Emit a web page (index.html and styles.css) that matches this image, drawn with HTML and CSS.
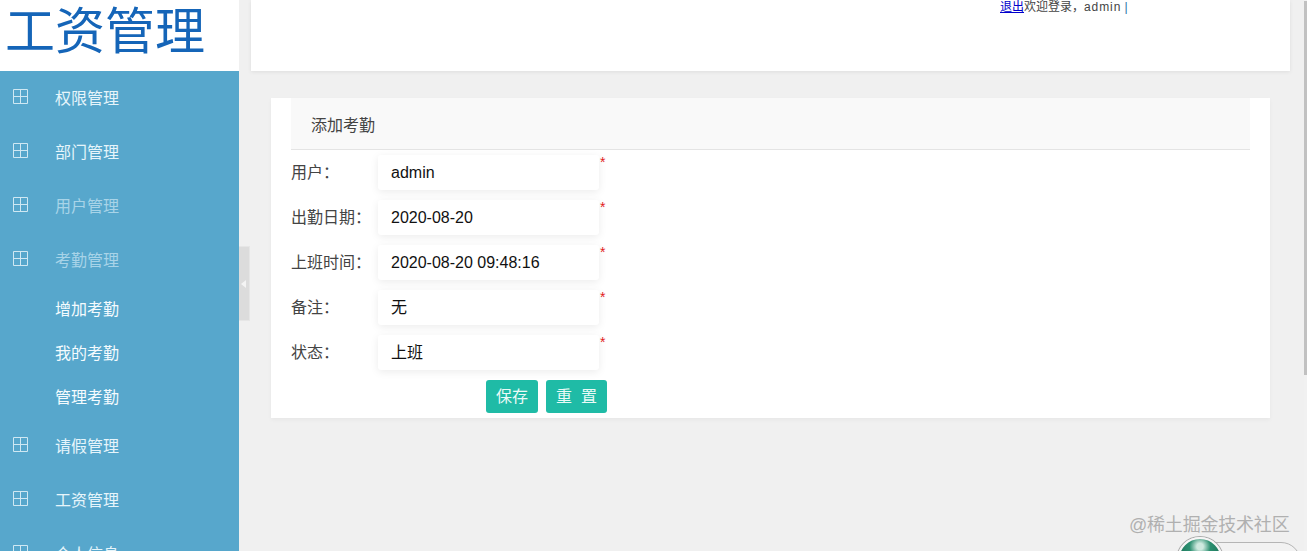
FILE: index.html
```html
<!DOCTYPE html>
<html lang="zh-CN">
<head>
<meta charset="utf-8">
<title>工资管理</title>
<link rel="stylesheet" href="styles.css">
</head>
<body>
<div class="page">
  <aside class="sidebar">
    <div class="logo">工资管理</div>
    <nav class="menu">
      <a class="item"><svg class="ico" viewBox="0 0 15 15"><path d="M.5.5h14v14H.5zM7.5.5v14M.5 7.5h14"/></svg>权限管理</a>
      <a class="item"><svg class="ico" viewBox="0 0 15 15"><path d="M.5.5h14v14H.5zM7.5.5v14M.5 7.5h14"/></svg>部门管理</a>
      <a class="item muted"><svg class="ico" viewBox="0 0 15 15"><path d="M.5.5h14v14H.5zM7.5.5v14M.5 7.5h14"/></svg>用户管理</a>
      <a class="item muted"><svg class="ico" viewBox="0 0 15 15"><path d="M.5.5h14v14H.5zM7.5.5v14M.5 7.5h14"/></svg>考勤管理</a>
      <a class="sub">增加考勤</a>
      <a class="sub">我的考勤</a>
      <a class="sub">管理考勤</a>
      <a class="item"><svg class="ico" viewBox="0 0 15 15"><path d="M.5.5h14v14H.5zM7.5.5v14M.5 7.5h14"/></svg>请假管理</a>
      <a class="item"><svg class="ico" viewBox="0 0 15 15"><path d="M.5.5h14v14H.5zM7.5.5v14M.5 7.5h14"/></svg>工资管理</a>
      <a class="item"><svg class="ico" viewBox="0 0 15 15"><path d="M.5.5h14v14H.5zM7.5.5v14M.5 7.5h14"/></svg>个人信息</a>
    </nav>
  </aside>
  <main class="main">
    <header class="top">
      <div class="user"><a class="logout" href="#">退出</a>欢迎登录，<span class="name">admin</span> <span class="bar">|</span></div>
    </header>
    <section class="card">
      <h2 class="card-title">添加考勤</h2>
      <form class="form">
        <div class="row"><label class="label">用户：</label><div class="input">admin</div><span class="star">*</span></div>
        <div class="row"><label class="label">出勤日期：</label><div class="input">2020-08-20</div><span class="star">*</span></div>
        <div class="row"><label class="label">上班时间：</label><div class="input">2020-08-20 09:48:16</div><span class="star">*</span></div>
        <div class="row"><label class="label">备注：</label><div class="input">无</div><span class="star">*</span></div>
        <div class="row"><label class="label">状态：</label><div class="input">上班</div><span class="star">*</span></div>
        <div class="actions"><span class="btn">保存</span><span class="btn">重&nbsp;&nbsp;置</span></div>
      </form>
    </section>
  </main>
  <div class="scroll"><div class="thumb"></div></div>
</div>
<div class="toggle"><span class="arrow"></span></div>
<div class="mark">@稀土掘金技术社区</div>
<div class="pill"></div>
<div class="orb"></div>
</body>
</html>
```
FILE: styles.css
```css
* { box-sizing: border-box; }
html, body { margin: 0; height: 100%; overflow: hidden; }
body {
  background: #f0f0f0;
  color: #333;
  font-family: "Liberation Sans", "Noto Sans CJK SC", sans-serif;
  font-size: 14px;
}
.page { display: flex; height: 551px; overflow: hidden; }

.sidebar { width: 239px; flex: none; background: #57a7cc; overflow: hidden; }
.logo {
  height: 71px;
  background: #fff;
  color: #1565b8;
  font-size: 50px;
  line-height: 65px;
  padding-left: 5px;
}
.menu { display: flex; flex-direction: column; }
.item {
  flex: none;
  height: 54px;
  display: flex;
  align-items: center;
  padding: 0 0 2px 13px;
  color: #e6f5fb;
  font-size: 16px;
}
.item.muted { color: #a8d4e8; }
.ico {
  width: 15px;
  height: 15px;
  margin: -1px 27px 0 0;
  fill: none;
  stroke: #cfe8f3;
  stroke-width: 1;
}
.sub {
  flex: none;
  height: 44px;
  line-height: 46px;
  padding-left: 55px;
  color: #f4fbfe;
  font-size: 16px;
}

.main { flex: none; width: 1053px; margin-left: 12px; }
.top {
  width: 1039px;
  height: 71px;
  background: #fff;
  box-shadow: 0 1px 4px rgba(0, 0, 0, .08);
  padding-left: 749px;
}
.user { font-size: 12px; line-height: 14px; color: #444; }
.logout { color: #00c; }
.name { letter-spacing: .9px; }
.bar { color: #1d6fa5; }

.card {
  width: 999px;
  margin: 27px 0 0 20px;
  padding: 0 20px 5px;
  background: #fff;
  box-shadow: 0 2px 4px rgba(0, 0, 0, .04);
}
.card-title {
  margin: 0;
  height: 52px;
  padding-left: 20px;
  background: #f9f9f9;
  border-bottom: 1px solid #e4e4e4;
  font-size: 16px;
  font-weight: 400;
  line-height: 55px;
  color: #444;
}
.form { display: flex; flex-direction: column; gap: 10px; padding-top: 5px; }
.row { display: flex; height: 35px; }
.label { width: 87px; flex: none; font-size: 16px; line-height: 35px; color: #444; }
.input {
  width: 221px;
  height: 35px;
  padding-left: 13px;
  background: #fff;
  border-radius: 3px;
  box-shadow: 0 2px 8px rgba(0, 0, 0, .08);
  color: #111;
  font-size: 16px;
  line-height: 35px;
}
.star { margin-left: 1px; color: #e21b1b; font-size: 14px; line-height: 15px; }
.actions { display: flex; gap: 8px; margin-left: 195px; }
.btn {
  height: 33px;
  padding: 0 10px;
  background: #1fbba6;
  border-radius: 3px;
  color: #eafaf7;
  font-size: 16px;
  line-height: 33px;
}

.scroll { flex: 1; padding-top: 1px; background: #f1f1f1; }
.thumb { width: 13px; height: 374px; background: #c1c1c1; }

.toggle {
  position: absolute;
  left: 239px;
  top: 246px;
  width: 11px;
  height: 75px;
  background: #dcdcdc;
  border: 1px solid #e6e6e6;
  border-left: 0;
  display: flex;
  align-items: center;
}
.arrow {
  margin-left: 2px;
  border: 4px solid transparent;
  border-left-width: 0;
  border-right: 5px solid #f4f4f4;
}
.mark {
  position: absolute;
  left: 1129px;
  top: 514px;
  color: #b0b0b0;
  font-size: 18px;
  letter-spacing: -.2px;
  line-height: 22px;
}
.pill {
  position: absolute;
  left: 1190px;
  top: 542px;
  width: 111px;
  height: 40px;
  background: #f2f2f2;
  border: 1px solid #b5b5b5;
  border-radius: 20px;
}
.orb {
  position: absolute;
  left: 1177px;
  top: 537px;
  width: 46px;
  height: 46px;
  border-radius: 50%;
  border: 2px solid #f6f6f6;
  box-shadow: 0 0 0 1px #aaa;
  background: radial-gradient(circle at 50% 18%, #cfe9df 0 8%, #2c8f70 26%, #13684f 70%);
}
```
